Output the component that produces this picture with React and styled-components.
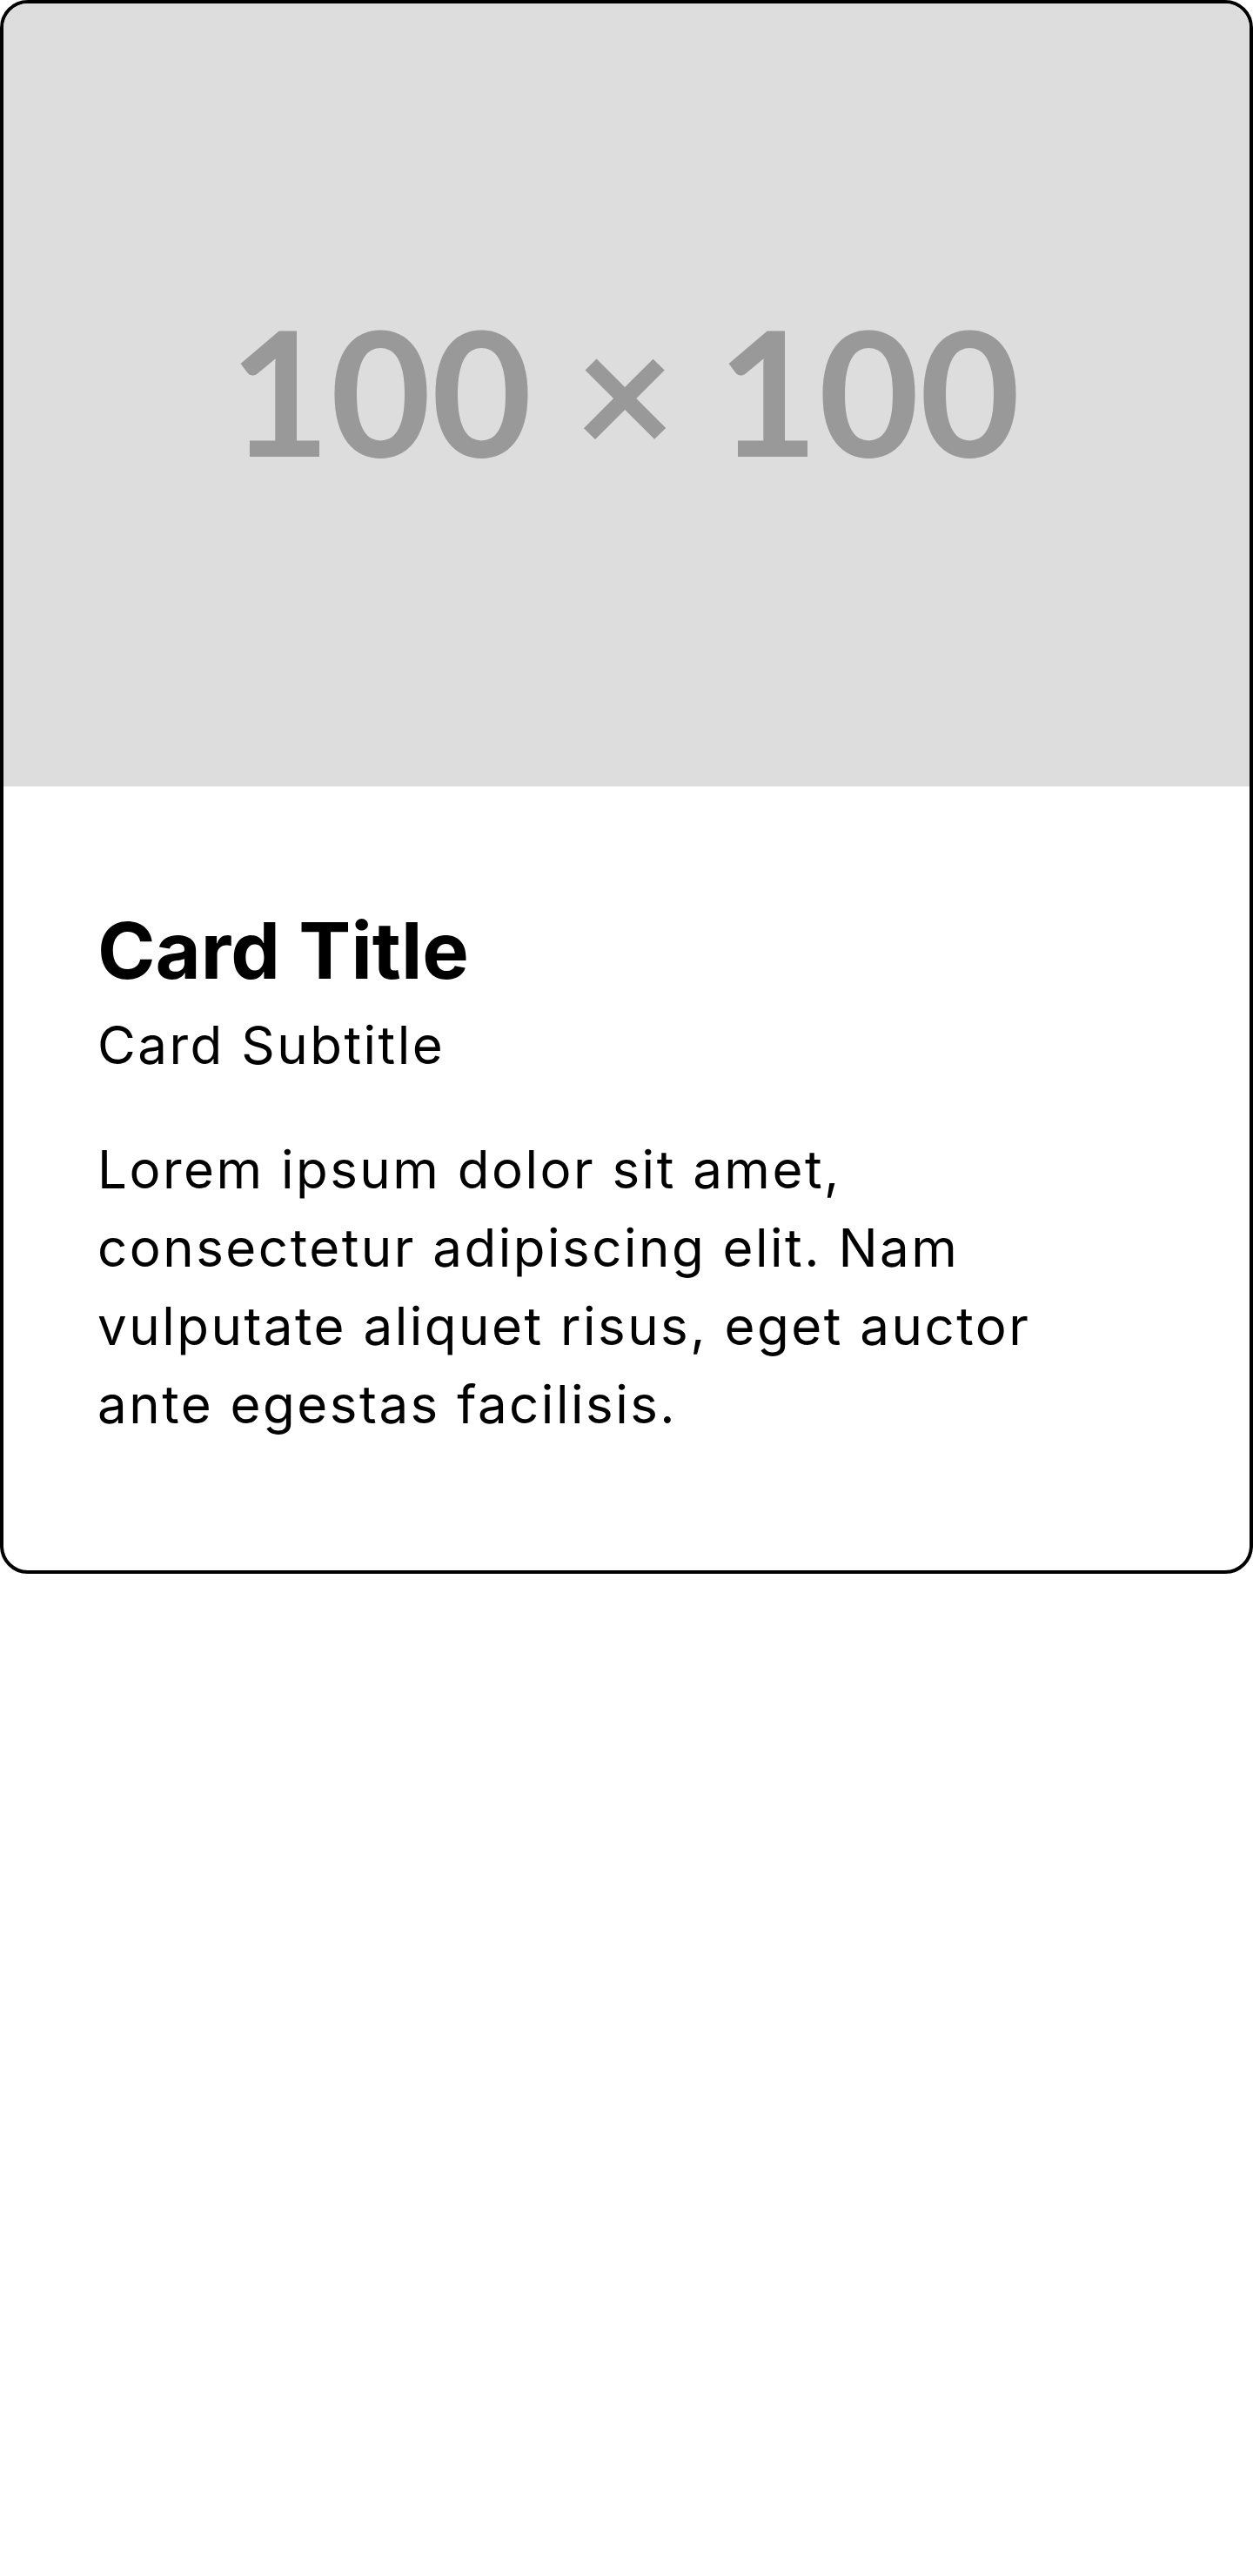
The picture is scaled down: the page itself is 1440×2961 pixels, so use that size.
import React from 'react';
import styled, { createGlobalStyle } from 'styled-components';

const GlobalStyle = createGlobalStyle`
  html, body {
    margin: 0;
    padding: 0;
    background: #fff;
  }
  body {
    font-family: Inter, "Noto Sans", sans-serif;
    color: #000;
  }
`;

const CardWrapper = styled.article`
  box-sizing: border-box;
  width: 100%;
  border: 4px solid #000;
  border-radius: 32px;
  overflow: hidden;
  background: #fff;
`;

const Placeholder = styled.div`
  display: flex;
  justify-content: center;
  align-items: center;
  height: 900px;
  padding: 0 4px 12px 0;
  box-sizing: border-box;
  background: #dddddd;
  color: #999999;
  font-family: Lato, "Open Sans", sans-serif;
  font-weight: 700;
  font-size: 200px;
`;

const CardBody = styled.div`
  padding: 135px 108px 146px;
`;

const CardTitle = styled.h2`
  margin: 0;
  font-size: 90px;
  font-weight: 700;
  line-height: 1.2;
`;

const CardSubtitle = styled.h3`
  margin: 9px 0 0;
  font-size: 60px;
  font-weight: 400;
  line-height: 1.5;
  letter-spacing: 2.5px;
`;

const CardText = styled.p`
  margin: 53px 0 0;
  max-width: ${props => props.width};
  font-size: 60px;
  line-height: 1.5;
  letter-spacing: 2.5px;
`;

const Card = ({ title, subtitle, children }) => (
  <CardWrapper>
    <Placeholder>100 × 100</Placeholder>
    <CardBody>
      <CardTitle>{title}</CardTitle>
      <CardSubtitle>{subtitle}</CardSubtitle>
      <CardText width="1140px">{children}</CardText>
    </CardBody>
  </CardWrapper>
);

const App = () => (
  <>
    <GlobalStyle />
    <Card title="Card Title" subtitle="Card Subtitle">
      Lorem ipsum dolor sit amet, consectetur adipiscing elit. Nam vulputate
      aliquet risus, eget auctor ante egestas facilisis.
    </Card>
  </>
);

export default App;
